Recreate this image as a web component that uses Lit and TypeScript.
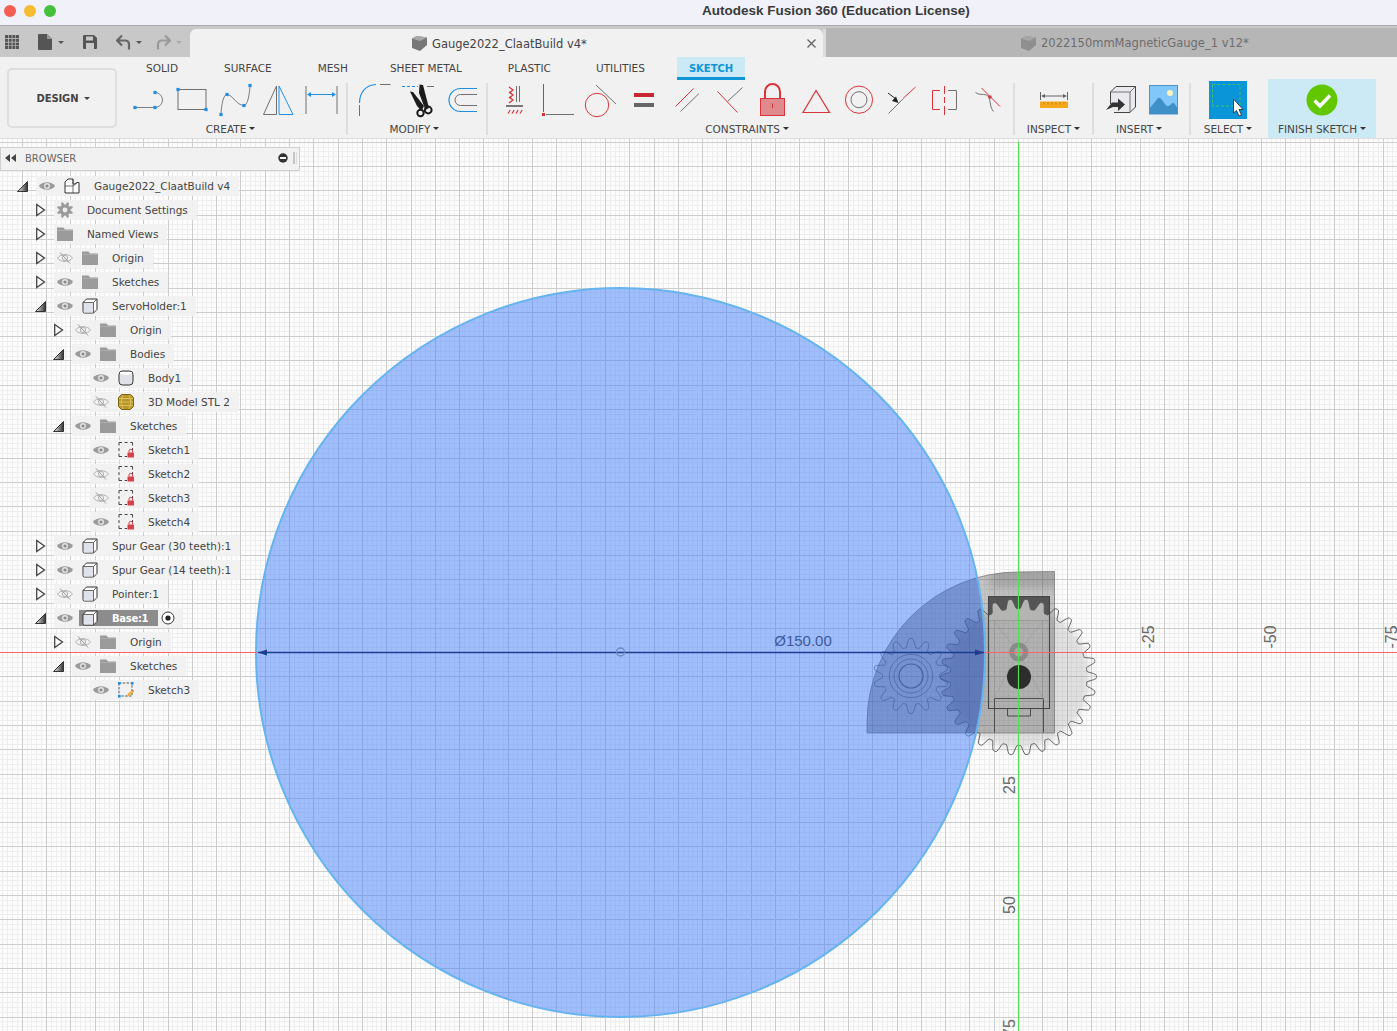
import { LitElement, html, css, svg } from "lit";
import { customElement } from "lit/decorators.js";

function gearPath(cx: number, cy: number, ro: number, rr: number, n: number, phase = 0): string {
  const pts: string[] = [];
  const S = 16;
  for (let i = 0; i < n; i++) {
    for (let j = 0; j < S; j++) {
      const t = j / S;
      const a = ((i + t) / n) * Math.PI * 2 + phase;
      const d = Math.abs(t - 0.5) * 2; // 0 at tip, 1 at root
      let k: number;
      if (d < 0.28) k = 1 - 0.08 * (d / 0.28) ** 2;
      else if (d < 0.7) k = 0.92 * (1 - (d - 0.28) / 0.42);
      else k = 0;
      const r = rr + (ro - rr) * k;
      pts.push(`${(cx + r * Math.cos(a)).toFixed(2)} ${(cy + r * Math.sin(a)).toFixed(2)}`);
    }
  }
  return "M" + pts.join("L") + "Z";
}

const OX = 1018.5;
const OY = 652.5;
const STEP = 4.86;

function gridLines() {
  const out: unknown[] = [];
  for (let pass = 0; pass < 2; pass++) {
    const major = pass === 1;
    const color = major ? "#cdcdcd" : "#eeeeee";
    for (let i = -215; i <= 80; i++) {
      if ((i % 5 === 0) !== major) continue;
      const x = Math.round(OX + i * STEP - 0.5) + 0.5;
      out.push(svg`<line x1=${x} x2=${x} y1="139" y2="1031" stroke=${color}/>`);
    }
    for (let i = -110; i <= 80; i++) {
      if ((i % 5 === 0) !== major) continue;
      const y = Math.round(OY + i * STEP - 0.5) + 0.5;
      out.push(svg`<line x1="0" x2="1397" y1=${y} y2=${y} stroke=${color}/>`);
    }
  }
  return out;
}

const blue = "#1f8fe6";
const gray = "#707070";
const red = "#d8343a";
const sq = (x: number, y: number, c = blue) => svg`<rect x=${x - 1.6} y=${y - 1.6} width="3.2" height="3.2" fill=${c}/>`;
const tb = (x: number, body: unknown, cls = "ti") =>
  html`<svg class=${cls} viewBox="${x} 82 36 36">${body}</svg>`;

const createIcons = [
  svg`<path d="M134.5 107.5H154.5A7.5 7.5 0 0 0 154.5 92.5" fill="none" stroke=${gray} stroke-width=".9"/>${sq(134.5, 107.5)}${sq(154.5, 107.5)}${sq(154.5, 92.5)}`,
  svg`<rect x="177.5" y="89.5" width="28" height="20" fill="none" stroke=${gray}/>${sq(177.5, 89.5)}${sq(205.5, 109.5)}`,
  svg`<path d="M220.5 114C221 104 223 94.5 226.5 94.5C232 94.5 236 105.5 243.5 105.5C247 105.5 249 95 249.5 85.5" fill="none" stroke=${gray} stroke-width=".9"/>${sq(220.5, 114.5)}${sq(226.5, 94.5)}${sq(243.5, 105.5)}${sq(249.5, 85.5)}`,
  svg`<path d="M276 86V114.5H263Z" fill="none" stroke=${gray}/><path d="M278.5 86V114.5H292.5Z" fill="none" stroke=${blue}/>`,
  svg`<path d="M305.5 86V114M336.5 86V114" stroke=${gray}/><path d="M308 94.5H334" stroke=${blue}/><path d="M306.5 94.5l4-2.5v5ZM335.5 94.5l-4-2.5v5Z" fill=${blue}/>`,
];
const modifyIcons = [
  svg`<path d="M359.5 103C359.5 92 366 85 376 84.5" fill="none" stroke=${blue} stroke-width="1.2"/><path d="M380 84.5H390.5M359.5 105V116" stroke=${gray}/>`,
  svg`<path d="M402 86.5H418" stroke=${blue} stroke-dasharray="3 2"/><path d="M427 86.5H434" stroke=${gray}/>
      <path d="M419.5 84.5L423 85L429 108L425.5 110L419 93Z" fill="#1c1c1c"/><path d="M410 91.5L413 92L424 106L421.5 111L417 106Z" fill="#1c1c1c"/>
      <circle cx="420.5" cy="113" r="3.2" fill="none" stroke="#1c1c1c" stroke-width="2"/><circle cx="428.2" cy="110" r="3.4" fill="none" stroke="#1c1c1c" stroke-width="2"/>`,
  svg`<path d="M477 88.5H460.5A11.5 11.5 0 0 0 460.5 111.5H477" fill="none" stroke=${blue} stroke-width="1.2"/><path d="M477 94.5H460.5A5.5 5.5 0 0 0 460.5 105.5H477" fill="none" stroke=${gray}/>`,
];
const constraintIcons = [
  svg`<path d="M509 87l4 3-4 3M509 92l4 3-4 3M509 97l4 3-4 3" fill="none" stroke=${red} stroke-width="1.3"/><path d="M516.5 86V102M519.5 86V102" stroke=${gray}/><path d="M506 106H523" stroke="#444" stroke-width="1.4"/><path d="M508 113.5l2.2-3.5M512 113.5l2.2-3.5M516 113.5l2.2-3.5M520 113.5l2.2-3.5" stroke=${red} stroke-width="1.2"/>`,
  svg`<path d="M543.5 84V112" stroke=${red}/><rect x="542" y="113" width="3" height="3" fill=${red}/><path d="M546 114.5H574" stroke=${gray}/>`,
  svg`<circle cx="597" cy="105" r="11.7" fill="none" stroke=${red}/><path d="M596 85L616 104" stroke=${gray}/>`,
  svg`<rect x="634" y="93" width="20" height="4" fill="#c8292e"/><rect x="634" y="103" width="20" height="4" fill="#666"/>`,
  svg`<path d="M675.5 106.5L693.5 88.5" stroke=${red}/><path d="M680.5 111.5L699 93.5" stroke=${gray}/>`,
  svg`<path d="M717.5 91.5L737.5 112.5" stroke=${red}/><path d="M727.5 101.5L742.5 87.5" stroke=${gray}/>`,
  svg`<path d="M765 98V91.5A7.5 7.5 0 0 1 780 91.5V98" fill="none" stroke=${red} stroke-width="2"/><rect x="760.5" y="98.5" width="24" height="17" fill="#e08a8d" stroke=${red}/><path d="M772.5 103.5V108" stroke=${red}/>`,
  svg`<path d="M816 90.5L803 112.5H829.5Z" fill="none" stroke=${red} stroke-width="1.2"/>`,
  svg`<circle cx="859" cy="99.7" r="13.6" fill="none" stroke=${red}/><circle cx="859" cy="99.7" r="8" fill="none" stroke=${gray}/>`,
  svg`<path d="M888.5 113.5L903 99" stroke=${gray}/><path d="M903 98.5L915.5 87" stroke=${red}/><path d="M888 93L896 99" stroke="#222"/><path d="M898.5 103l-6.5-2 4-4.5Z" fill="#222"/>`,
  svg`<path d="M940 90.5H932.5V109.5H940" fill="none" stroke=${red}/><path d="M948 90.5H956.5V109.5H948" fill="none" stroke=${gray}/><path d="M944.5 86V94M944.5 97V103M944.5 106V115" stroke=${red}/>`,
  svg`<path d="M981.5 88L1000 106.5" stroke=${red}/><path d="M975.5 92.5C981 96 984 93 988 96C991 99 989 106 993.5 111.5" fill="none" stroke=${gray}/><rect x="988.5" y="95.5" width="3" height="3" fill=${red}/>`,
];

function eye(on: boolean) {
  return on
    ? html`<svg class="eye" viewBox="0 0 16 12"><path d="M0 6C3 1 13 1 16 6C13 11 3 11 0 6Z" fill="#9b9b9b"/><circle cx="8" cy="6" r="3" fill="#e4e4e4"/><circle cx="8" cy="6" r="1.6" fill="#8a8a8a"/></svg>`
    : html`<svg class="eye" viewBox="0 0 16 12"><path d="M.5 6C3.5 1.5 12.5 1.5 15.5 6C12.5 10.5 3.5 10.5 .5 6Z" fill="none" stroke="#b0b0b0"/><circle cx="8" cy="6" r="2.6" fill="none" stroke="#b0b0b0"/><path d="M3 .5L13 11.5" stroke="#999"/></svg>`;
}
const ico: Record<string, unknown> = {
  folder: html`<svg class="ic" viewBox="0 0 16 16"><path d="M0 1.5H6.5L8 3.5H16V15H0Z" fill="#9b9b9b"/><path d="M0 4.5H16" stroke="#b5b5b5" stroke-width=".7"/></svg>`,
  comp: html`<svg class="ic" viewBox="0 0 16 16"><path d="M1 4.5L4.5 1H15V11.5L11.5 15H2.5Q1 15 1 13.5Z" fill="#fff" stroke="#333"/><path d="M2 5H11V14.5H2Z" fill="#dfe2e9"/><path d="M1 4.5H11.5V15M11.5 4.5L15 1" fill="none" stroke="#444" stroke-width=".8"/></svg>`,
  root: html`<svg class="ic" viewBox="0 0 16 16"><path d="M1 4L4 1H9V6H11L13 4.5H15V15H1Z" fill="#fbfbfb" stroke="#333"/><path d="M1 8H9V15M9 8V1M9 8L13 5" fill="none" stroke="#444" stroke-width=".7"/></svg>`,
  gear: html`<svg class="ic" viewBox="0 0 16 16"><path d=${gearPath(8, 8, 8.2, 5.6, 8)} fill="#9b9b9b"/><circle cx="8" cy="8" r="2.4" fill="#eee"/></svg>`,
  body: html`<svg class="ic" viewBox="0 0 16 16"><rect x="1" y="1" width="14" height="14" rx="3.5" fill="#dfe2e9" stroke="#333"/><path d="M2 3.5Q8 6.5 14 3.5V2H2Z" fill="#fff"/></svg>`,
  stl: html`<svg class="ic" viewBox="0 0 16 16"><path d="M3.5 .5H12.5L15.5 3.5V12.5L12.5 15.5H3.5L.5 12.5V3.5Z" fill="#b8962c" stroke="#7d6412"/><path d="M1 4.5H15M1 8H15M1 11.5H15M5 1L3 8L5 15M11 1L13 8L11 15" fill="none" stroke="#e2c867" stroke-width=".8"/></svg>`,
  sketch: html`<svg class="ic" viewBox="0 0 16 16"><path d="M1 .5H14.5M1 .5V14.5M1 14.5H9M14.5 .5V8" fill="none" stroke="#444" stroke-dasharray="3 2.6"/><rect x="9.5" y="10.5" width="6.5" height="5" fill="#d8404a"/><path d="M11 10.5V9A1.7 1.7 0 0 1 14.5 9V10.5" fill="none" stroke="#d8404a"/></svg>`,
  sketchEdit: html`<svg class="ic" viewBox="0 0 16 16"><rect x="1" y="1" width="13" height="13" fill="none" stroke="#555" stroke-dasharray="2.4 1.4"/><rect x="0" y="0" width="2.6" height="2.6" fill=${blue}/><rect x="13" y="0" width="2.6" height="2.6" fill=${blue}/><rect x="0" y="13" width="2.6" height="2.6" fill=${blue}/><path d="M8.5 15L10 11.5L14 8L15.5 10L12 13.5Z" fill="#f0b040"/><path d="M14 8L15.5 10L16 8.5Z" fill="#e8484a"/></svg>`,
};

type Row = { d: number; exp?: "o" | "c"; eye?: boolean; icon: string; label: string; sel?: boolean };
const rows: Row[] = [
  { d: 0, exp: "o", eye: true, icon: "root", label: "Gauge2022_ClaatBuild v4" },
  { d: 1, exp: "c", icon: "gear", label: "Document Settings" },
  { d: 1, exp: "c", icon: "folder", label: "Named Views" },
  { d: 1, exp: "c", eye: false, icon: "folder", label: "Origin" },
  { d: 1, exp: "c", eye: true, icon: "folder", label: "Sketches" },
  { d: 1, exp: "o", eye: true, icon: "comp", label: "ServoHolder:1" },
  { d: 2, exp: "c", eye: false, icon: "folder", label: "Origin" },
  { d: 2, exp: "o", eye: true, icon: "folder", label: "Bodies" },
  { d: 3, eye: true, icon: "body", label: "Body1" },
  { d: 3, eye: false, icon: "stl", label: "3D Model STL 2" },
  { d: 2, exp: "o", eye: true, icon: "folder", label: "Sketches" },
  { d: 3, eye: true, icon: "sketch", label: "Sketch1" },
  { d: 3, eye: false, icon: "sketch", label: "Sketch2" },
  { d: 3, eye: false, icon: "sketch", label: "Sketch3" },
  { d: 3, eye: true, icon: "sketch", label: "Sketch4" },
  { d: 1, exp: "c", eye: true, icon: "comp", label: "Spur Gear (30 teeth):1" },
  { d: 1, exp: "c", eye: true, icon: "comp", label: "Spur Gear (14 teeth):1" },
  { d: 1, exp: "c", eye: false, icon: "comp", label: "Pointer:1" },
  { d: 1, exp: "o", eye: true, icon: "comp", label: "Base:1", sel: true },
  { d: 2, exp: "c", eye: false, icon: "folder", label: "Origin" },
  { d: 2, exp: "o", eye: true, icon: "folder", label: "Sketches" },
  { d: 3, eye: true, icon: "sketchEdit", label: "Sketch3" },
];

function expander(r: Row) {
  if (!r.exp) return html`<span class="exp"></span>`;
  if (r.exp === "c")
    return html`<span class="exp"><svg viewBox="0 0 22 24" class="tri"><path d="M4.7 6.5L12.5 12L4.7 17.5Z" fill="#fff" stroke="#444" stroke-width="1.3"/></svg></span>`;
  return html`<span class="exp"><svg viewBox="0 0 22 24" class="tri"><defs><linearGradient id="tg" x1="0" y1="0" x2="1" y2="0"><stop offset="0" stop-color="#eee"/><stop offset="1" stop-color="#333"/></linearGradient></defs><path d="M3.5 17.5L13.5 7.5V17.5Z" fill="url(#tg)" stroke="#333"/></svg></span>`;
}

@customElement("app-root")
export class AppRoot extends LitElement {
  static styles = css`
    :host { display: block; width: 1397px; height: 1031px; overflow: hidden; position: relative; background: #fcfcfc; font-family: "DejaVu Sans", sans-serif; }
    .page { display: flex; flex-direction: column; height: 100%; }
    .title { height: 25px; box-sizing: content-box; background: #f1f1f9; border-bottom: 1px solid #a9a9ad; display: flex; align-items: flex-start; flex: none; }
    .lights { display: flex; gap: 8px; padding: 5px 0 0 4px; width: 52px; }
    .lights i { width: 12px; height: 12px; border-radius: 50%; display: block; }
    .r { background: #f45f54; } .y { background: #f8bc33; } .g { background: #45c13d; }
    .ttl { margin-left: 646px; padding-top: 3px; font: bold 13.5px "Liberation Sans", sans-serif; color: #3a3a3a; white-space: nowrap; }
    .tabs { height: 31px; background: #c8c8c8; display: flex; flex: none; }
    .quick { width: 190px; display: flex; align-items: center; flex: none; }
    .quick svg { display: block; height: 16px; flex: none; }
    .caret { width: 0; height: 0; border-left: 3px solid transparent; border-right: 3px solid transparent; border-top: 3.5px solid currentColor; display: inline-block; flex: none; }
    .q1 { margin-left: 5px; width: 14px; } .q2 { margin-left: 19px; width: 14px; } .q3 { margin-left: 19px; width: 14px; }
    .q4 { margin-left: 19px; width: 15px; } .q5 { margin-left: 14px; width: 15px; }
    .quick .caret { color: #555; margin-left: 5px; margin-top: 1px; }
    .quick .c1 { margin-left: 6px; }
    .quick .off { color: #aaa; }
    .tab { display: flex; align-items: center; font-size: 11.5px; white-space: nowrap; padding-top: 1px; box-sizing: border-box; }
    .tab svg { width: 17px; height: 17px; margin-right: 4px; flex: none; }
    .active { width: 633px; margin-top: 3px; background: #f1f1f1; border-radius: 6px 6px 0 0; padding-left: 221px; color: #444; flex: none; }
    .tab .close { margin-left: auto; margin-right: 7px; width: 9px; height: 9px; }
    .gap { width: 3px; background: #dcdcdc; margin-top: 3px; flex: none; }
    .inactive { flex: 1; margin-top: 2px; background: #b6b6b6; padding-left: 194px; color: #6d6d6d; }
    .bar { height: 81px; background: #f1f1f1; border-bottom: 1px solid #dcdcdc; display: flex; flex: none; padding-left: 7px; }
    .design { width: 110px; height: 60px; margin-top: 11px; padding-left: 2px; border: 2px solid #dedede; border-radius: 5px; box-sizing: border-box; display: flex; align-items: center; justify-content: center; gap: 5px; font-size: 10px; font-weight: 700; letter-spacing: -0.1px; color: #444; flex: none; }
    .design .caret { margin-top: 1px; }
    .tools { margin-left: 6px; width: 1260px; flex: none; }
    .tbtabs { height: 23px; display: flex; }
    .tbtabs span { padding: 0 23px; font-size: 10.5px; color: #444; line-height: 23px; white-space: nowrap; }
    .tbtabs .tight { margin-right: -4px; }
    .tbtabs .tight2 { margin-right: -1px; }
    .tbtabs .cur { padding: 0 12px; margin: 0 11px 0 9px; background: #cce9f6; color: #0f96d9; font-weight: 700; font-size: 10px; border-bottom: 3px solid #0f96d9; height: 20px; line-height: 23px; }
    .groups { display: flex; height: 58px; }
    .grp { flex: none; padding-top: 2px; display: flex; flex-direction: column; box-sizing: border-box; }
    .icons { display: flex; gap: 7px; height: 36px; }
    .ti { width: 36px; height: 36px; flex: none; overflow: visible; display: block; }
    .lab { margin-top: 5px; display: flex; justify-content: center; align-items: center; gap: 3px; font-size: 10.5px; line-height: 13px; color: #444; white-space: nowrap; }
    .lab .caret { margin-top: -2px; color: #333; }
    .sep { width: 2px; height: 52px; margin-top: 3px; background: #dedede; flex: none; }
    .g-create { width: 223px; } .g-create .icons { padding-left: 8.5px; } .g-create .lab { padding-right: 8px; }
    .g-modify { width: 138px; } .g-modify .icons { padding-left: 9px; } .g-modify .lab { padding-right: 5px; }
    .g-con { width: 525px; } .g-con .icons { padding-left: 9px; } .g-con .lab { padding-right: 7px; }
    .g-ins { width: 77px; } .g-ins .icons { padding-left: 21px; }
    .g-insert { width: 95px; } .g-insert .icons { padding-left: 10px; } .g-insert .lab { padding-right: 5px; }
    .g-sel { width: 77px; } .g-sel .icons { padding-left: 19px; } .g-sel .lab { padding-right: 3px; }
    .g-fin { width: 108px; background: #cce9f6; margin-top: -1px; height: 59px; padding-top: 3px; } .g-fin .icons { padding-left: 36px; }
    .canvas { flex: 1; position: relative; overflow: hidden; }
    .cad { position: absolute; left: 0; top: 0; width: 1397px; height: 892px; display: block; }
    .browser { position: absolute; left: 0; top: 8px; width: 300px; }
    .bh { height: 24px; box-sizing: border-box; padding-bottom: 2px; background: #f1f1f1; border: 1px solid #cfcfcf; display: flex; align-items: center; font-size: 10px; color: #666; }
    .bh .bt { margin-left: 9px; }
    .bh svg { flex: none; }
    .rew { width: 11px; height: 8px; margin-left: 4px; }
    .minus { width: 10px; height: 10px; margin-left: auto; }
    .pipe { width: 5px; height: 12px; margin: 0 1px 0 5px; }
    .tree { padding: 3px 0 0 14px; }
    .row { display: flex; align-items: center; height: 24px; }
    .d1 { padding-left: 18px; } .d2 { padding-left: 36px; } .d3 { padding-left: 54px; }
    .exp { width: 22px; height: 24px; flex: none; display: block; }
    .tri { width: 22px; height: 24px; display: block; }
    .pill { display: flex; align-items: center; height: 20px; background: rgba(241, 241, 241, 0.94); padding-right: 9px; font-size: 10.5px; color: #444; white-space: nowrap; }
    .eyebox { width: 22px; display: flex; justify-content: center; flex: none; }
    .eye { width: 16px; height: 12px; display: block; }
    .icbox { width: 28px; display: flex; justify-content: center; flex: none; }
    .icbox.noeye { width: 22px; }
    .ic { width: 16px; height: 16px; display: block; overflow: visible; }
    .lbl { margin-left: 8px; }
    .noeye + .lbl { margin-left: 11px; }
    .sel { display: flex; align-items: center; height: 16px; margin-left: 3px; background: #8c8c8c; padding-right: 10px; color: #fff; font-weight: 700; font-size: 10px; letter-spacing: -0.3px; }
    .sel .icbox { width: 22px; }
    .sel .lbl { margin-left: 11px; }
    .radio { width: 14px; height: 14px; margin-left: 3px; display: block; flex: none; }
    .pill.hassel { padding-right: 7px; }
    text { font-family: "Liberation Sans", sans-serif; }
  `;

  private renderRow(r: Row) {
    const icon = ico[r.icon];
    return html`<div class="row d${r.d}">
      ${expander(r)}
      <div class="pill ${r.sel ? "hassel" : ""}">
        ${r.eye === undefined ? "" : html`<span class="eyebox">${eye(r.eye)}</span>`}
        ${r.sel
          ? html`<span class="sel"><span class="icbox">${icon}</span><span class="lbl">${r.label}</span></span>
              <svg class="radio" viewBox="0 0 14 14"><circle cx="7" cy="7" r="6" fill="#fff" stroke="#333"/><circle cx="7" cy="7" r="2.6" fill="#222"/></svg>`
          : html`<span class="icbox ${r.eye === undefined ? "noeye" : ""}">${icon}</span><span class="lbl">${r.label}</span>`}
      </div>
    </div>`;
  }

  render() {
    const cube = (c: string, c2: string) =>
      html`<svg viewBox="0 0 17 17"><path d="M1 3.5L6 1L16 2.5V10L9 16L1 13Z" fill=${c}/><path d="M1 3.5L9 6L16 2.5L6 1Z" fill=${c2}/></svg>`;
    const big = gearPath(1018.5, 677, 78, 68.5, 30, 0.1);
    const small = gearPath(911, 676, 37.5, 28.5, 14, -Math.PI / 2 - Math.PI / 14);
    const base = "M867 733V723A151 151 0 0 1 1018 572L1054.5 571.5V733Z";
    return html`<div class="page">
      <div class="title">
        <div class="lights"><i class="r"></i><i class="y"></i><i class="g"></i></div>
        <div class="ttl">Autodesk Fusion 360 (Education License)</div>
      </div>
      <div class="tabs">
        <div class="quick">
          <svg class="q1" viewBox="0 0 14 14"><path d="M0 0h3v3H0zM3.7 0h3v3h-3zM7.4 0h3v3h-3zM11 0h3v3h-3zM0 3.7h3v3H0zM3.7 3.7h3v3h-3zM7.4 3.7h3v3h-3zM11 3.7h3v3h-3zM0 7.4h3v3H0zM3.7 7.4h3v3h-3zM7.4 7.4h3v3h-3zM11 7.4h3v3h-3zM0 11h3v3H0zM3.7 11h3v3h-3zM7.4 11h3v3h-3zM11 11h3v3h-3z" fill="#555"/></svg>
          <svg class="q2" viewBox="0 0 14 16"><path d="M0 1Q0 0 1 0H9L14 5V15Q14 16 13 16H1Q0 16 0 15Z" fill="#555"/><path d="M9 0V5H14" fill="#999"/></svg>
          <span class="caret c1"></span>
          <svg class="q3" viewBox="0 0 14 14"><path d="M1 0H11L14 3V13Q14 14 13 14H1Q0 14 0 13V1Q0 0 1 0Z" fill="#555"/><rect x="3" y="1.5" width="7" height="4" fill="#c8c8c8"/><rect x="3" y="8" width="8" height="6" fill="#c8c8c8"/></svg>
          <svg class="q4" viewBox="0 0 15 15"><path d="M6 1L1 6L6 11M1 6H9Q13 6 13 10V15" fill="none" stroke="#666" stroke-width="2.2"/></svg>
          <span class="caret"></span>
          <svg class="q5" viewBox="0 0 15 15"><path d="M9 1L14 6L9 11M14 6H6Q2 6 2 10V15" fill="none" stroke="#999" stroke-width="2.2"/></svg>
          <span class="caret off"></span>
        </div>
        <div class="tab active">${cube("#777", "#a8a8a8")}<span>Gauge2022_ClaatBuild v4*</span>
          <svg class="close" viewBox="0 0 9 9"><path d="M.5 .5L8.5 8.5M8.5 .5L.5 8.5" stroke="#666" stroke-width="1.4"/></svg>
        </div>
        <div class="gap"></div>
        <div class="tab inactive">${cube("#8f8f8f", "#a6a6a6")}<span>2022150mmMagneticGauge_1 v12*</span></div>
      </div>
      <div class="bar">
        <div class="design">DESIGN<span class="caret"></span></div>
        <div class="tools">
          <div class="tbtabs">
            <span>SOLID</span><span>SURFACE</span><span class="tight">MESH</span><span>SHEET METAL</span><span class="tight2">PLASTIC</span><span>UTILITIES</span><span class="cur">SKETCH</span>
          </div>
          <div class="groups">
            <div class="grp g-create"><div class="icons">${createIcons.map((b, i) => tb(131.5 + i * 43, b))}</div><div class="lab">CREATE<span class="caret"></span></div></div>
            <div class="sep"></div>
            <div class="grp g-modify"><div class="icons">${modifyIcons.map((b, i) => tb(357 + i * 43, b))}</div><div class="lab">MODIFY<span class="caret"></span></div></div>
            <div class="sep"></div>
            <div class="grp g-con"><div class="icons">${constraintIcons.map((b, i) => tb(497 + i * 43, b))}</div><div class="lab">CONSTRAINTS<span class="caret"></span></div></div>
            <div class="sep"></div>
            <div class="grp g-ins"><div class="icons">${tb(1036, svg`
              <rect x="1040" y="101.5" width="28" height="6.5" fill="#f5a81c"/>
              <path d="M1044 102v2.5M1048 102v2.5M1052 102v2.5M1056 102v2.5M1060 102v2.5M1064 102v2.5" stroke="#b57a10" stroke-width=".7"/>
              <path d="M1040.5 92V100M1067.5 92V100M1043 96H1065" stroke="#666"/><path d="M1041 96l4-2v4ZM1067 96l-4-2v4Z" fill="#666"/>`)}</div><div class="lab">INSPECT<span class="caret"></span></div></div>
            <div class="sep"></div>
            <div class="grp g-insert"><div class="icons">
              ${tb(1104, svg`<path d="M1110.5 104V92L1116 86.5H1135.5V107L1130 112.5H1114" fill="#e9e9ee" stroke="#444"/><path d="M1111 92H1130V112M1130 92L1135.5 86.5" fill="none" stroke="#555" stroke-width=".8"/><path d="M1106 110L1112 102.5H1118V98.5L1125 104.5L1118 111V107H1113Z" fill="#333"/>`)}
              ${tb(1147, svg`<rect x="1149.5" y="85.5" width="28" height="28.5" fill="#82c7fa" stroke="#4a93cd"/><circle cx="1170" cy="93" r="3" fill="#fff3c0"/><path d="M1150 108L1158 98C1161 96 1164 104 1167 106C1170 107 1172 102 1174 103L1177.5 108V114H1150Z" fill="#3f8fc9"/>`)}
            </div><div class="lab">INSERT<span class="caret"></span></div></div>
            <div class="sep"></div>
            <div class="grp g-sel"><div class="icons">${tb(1210, svg`<rect x="1209" y="81" width="38" height="38" fill="#0b95d9"/><rect x="1212.5" y="84.5" width="27.5" height="21.5" fill="none" stroke="#3fbf6f" stroke-dasharray="3 2"/><path d="M1233.5 99V113L1236.5 110.5L1239 116L1241.5 115L1239 109.5H1243Z" fill="#fff" stroke="#222" stroke-width=".8"/>`)}</div><div class="lab">SELECT<span class="caret"></span></div></div>
            <div class="grp g-fin"><div class="icons">${tb(1304, svg`<circle cx="1322" cy="100" r="15.5" fill="#63c700"/><path d="M1314.5 100.5L1320 106L1330 95.5" fill="none" stroke="#fff" stroke-width="3.4"/>`)}</div><div class="lab">FINISH SKETCH<span class="caret"></span></div></div>
          </div>
        </div>
      </div>
      <div class="canvas">
        <svg class="cad" viewBox="0 139 1397 892">
          <defs>
            <filter id="soft" x="-20%" y="-20%" width="140%" height="140%"><feGaussianBlur stdDeviation="3"/></filter>
            <filter id="soft2" x="-30%" y="-30%" width="160%" height="160%"><feGaussianBlur stdDeviation="5"/></filter>
            <filter id="soft3" x="-30%" y="-30%" width="160%" height="160%"><feGaussianBlur stdDeviation=".7"/></filter>
            <clipPath id="rackc"><rect x="988.5" y="596.5" width="61" height="24"/></clipPath>
            <clipPath id="basec"><path d=${base}/></clipPath>
            <clipPath id="circlec"><circle cx="620.5" cy="652.5" r="364.5"/></clipPath>
          </defs>
          <g shape-rendering="crispEdges">${gridLines()}</g>
          <circle cx="1018.5" cy="677" r="71" fill="rgba(110,110,110,.2)" filter="url(#soft)"/>
          <path d=${base} fill="rgba(70,70,72,.3)"/>
          <g clip-path="url(#basec)"><rect x="990" y="566" width="70" height="22" fill="rgba(60,60,60,.22)" filter="url(#soft2)"/></g>
          <path d=${base} fill="none" stroke="#777" stroke-width=".8"/>
          <rect x="988.5" y="596.5" width="61" height="24" fill="#555"/>
          <path d=${big} fill="#b4b4b2" clip-path="url(#rackc)"/>
          <path d=${big} fill="none" stroke="#555" stroke-width=".9"/>
          <path d=${small} fill="none" stroke="#555" stroke-width=".75"/>
          <circle cx="911" cy="676" r="21.7" fill="none" stroke="#555" stroke-width=".7"/>
          <circle cx="911" cy="676" r="17" fill="none" stroke="#555" stroke-width=".7"/>
          <circle cx="911" cy="676" r="12" fill="none" stroke="#555" stroke-width="1.2"/>
          <path d="M988.5 596.5H1049.5V708.5H988.5Z" fill="none" stroke="#444" stroke-width="1.1"/>
          <path d="M994.5 732.5V698.5H1043.5V732.5M1007.5 708.5V716H1030.5V708.5" fill="none" stroke="#444" stroke-width=".9"/>
          <path d="M993 620L1018 652L1044 620M993 700L1018 652L1044 700" fill="none" stroke="#999" stroke-width=".5"/>
          <circle cx="1019" cy="677" r="12" fill="#2d2d2d"/>
          <circle cx="1018.7" cy="652" r="9.5" fill="#8a8a8a" filter="url(#soft3)"/>
          <circle cx="1018.7" cy="652" r="4.5" fill="#a8a8a8"/>
          <circle cx="620.5" cy="652.5" r="364.5" fill="rgba(66,126,250,.49)"/>
          <g clip-path="url(#circlec)"><path d=${base} fill="rgba(40,60,120,.14)"/><path d=${big} fill="rgba(30,50,120,.16)" clip-path="url(#basec)"/></g>
          <circle cx="620.5" cy="652.5" r="364.5" fill="none" stroke="#66b4ef" stroke-width="2"/>
          <path d="M0 652.5H1397" stroke="#ff6464" stroke-width="1.2"/>
          <path d="M1018.5 142V1031" stroke="#4fe04f" stroke-width="1.2"/>
          <path d="M258 652.5H984" stroke="#1f3d8f" stroke-width="1.3"/>
          <path d="M258 652.5l9-3v6ZM984 652.5l-9-3v6Z" fill="#1f3d8f"/>
          <circle cx="620.5" cy="652" r="4" fill="none" stroke="#7088c4" stroke-width="1.4"/>
          <text x="803" y="646" font-size="15" fill="#3e5a9c" text-anchor="middle">Ø150.00</text>
          <g font-size="16" fill="#6a6a6a" text-anchor="middle">
            <text transform="translate(1154 637) rotate(-90)">-25</text>
            <text transform="translate(1276 637) rotate(-90)">-50</text>
            <text transform="translate(1396.5 637) rotate(-90)">-75</text>
            <text transform="translate(1015 785) rotate(-90)">25</text>
            <text transform="translate(1015 905) rotate(-90)">50</text>
            <text transform="translate(1015 1028) rotate(-90)">75</text>
          </g>
        </svg>
        <div class="browser">
          <div class="bh">
            <svg class="rew" viewBox="0 0 11 8"><path d="M5 0V8L0 4ZM11 0V8L6 4Z" fill="#444"/></svg>
            <span class="bt">BROWSER</span>
            <svg class="minus" viewBox="0 0 10 10"><circle cx="5" cy="5" r="4.7" fill="#333"/><rect x="2" y="4" width="6" height="2" fill="#fff"/></svg>
            <svg class="pipe" viewBox="0 0 5 12"><path d="M1 0V12" stroke="#999"/><path d="M3.5 0V12" stroke="#ddd"/></svg>
          </div>
          <div class="tree">${rows.map((r) => this.renderRow(r))}</div>
        </div>
      </div>
    </div>`;
  }
}
